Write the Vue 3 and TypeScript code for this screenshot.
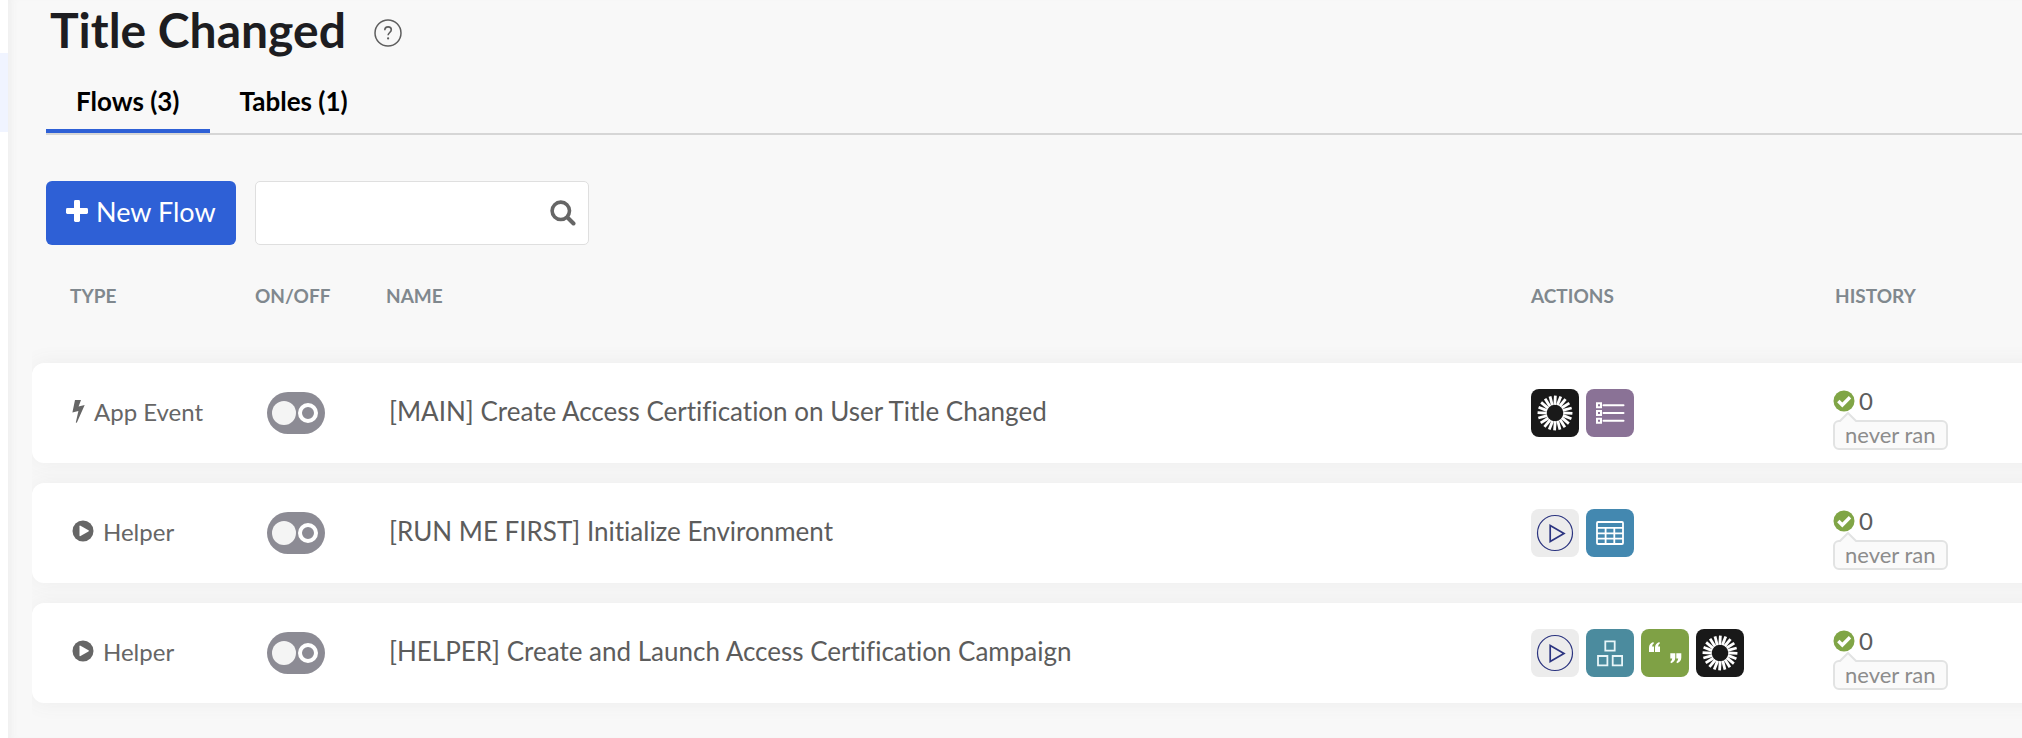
<script setup lang="ts">
import { ref } from 'vue'

type ActionIcon = 'okta' | 'list' | 'play' | 'table' | 'blocks' | 'quotes'

interface Flow {
  id: number
  type: 'App Event' | 'Helper'
  on: boolean
  name: string
  actions: ActionIcon[]
  runs: number
  status: string
}

const flows = ref<Flow[]>([
  {
    id: 1,
    type: 'App Event',
    on: false,
    name: '[MAIN] Create Access Certification on User Title Changed',
    actions: ['okta', 'list'],
    runs: 0,
    status: 'never ran',
  },
  {
    id: 2,
    type: 'Helper',
    on: false,
    name: '[RUN ME FIRST] Initialize Environment',
    actions: ['play', 'table'],
    runs: 0,
    status: 'never ran',
  },
  {
    id: 3,
    type: 'Helper',
    on: false,
    name: '[HELPER] Create and Launch Access Certification Campaign',
    actions: ['play', 'blocks', 'quotes', 'okta'],
    runs: 0,
    status: 'never ran',
  },
])

const tab = ref<'flows' | 'tables'>('flows')
const query = ref('')
const rays = Array.from({ length: 20 }, (_, i) => i * 18)
</script>

<template>
  <div class="page">
    <aside class="rail"><div class="rail-item"></div></aside>
    <main class="main">
      <header class="head">
        <h1>Title Changed</h1>
        <button class="help" type="button" aria-label="Help">
          <svg viewBox="0 0 28 28" width="28" height="28" fill="none" stroke="#5e5e5e">
            <circle cx="14" cy="14" r="13" stroke-width="1.5" />
            <path d="M10.8 11.2c0-2 1.3-3.3 3.3-3.3s3.2 1.2 3.2 2.9c0 2.6-3.2 2.8-3.2 5.5" stroke-width="1.6" />
            <circle cx="14.1" cy="19.4" r="1.1" fill="#5e5e5e" stroke="none" />
          </svg>
        </button>
      </header>

      <nav class="tabs" role="tablist">
        <button type="button" role="tab" :aria-selected="tab === 'flows'" :class="['tab', { active: tab === 'flows' }]" @click="tab = 'flows'">Flows (3)</button>
        <button type="button" role="tab" :aria-selected="tab === 'tables'" :class="['tab', { active: tab === 'tables' }]" @click="tab = 'tables'">Tables (1)</button>
      </nav>

      <div class="toolbar">
        <button class="new" type="button">
          <svg viewBox="0 0 22 22" width="22" height="22" fill="#fff">
            <rect x="8" y="0" width="6" height="22" rx="1.4" />
            <rect x="0" y="8" width="22" height="6" rx="1.4" />
          </svg>
          <span>New Flow</span>
        </button>
        <div class="search">
          <input v-model="query" type="text" aria-label="Search flows" />
          <svg viewBox="0 0 26 26" width="26" height="26" fill="none" stroke="#666" stroke-linecap="round">
            <circle cx="10.8" cy="10.8" r="8.7" stroke-width="3.6" />
            <path d="M17.5 17.500l6 6" stroke-width="4" />
          </svg>
        </div>
      </div>

      <div class="list">
        <table>
          <colgroup>
            <col class="c-type" /><col class="c-switch" /><col /><col class="c-actions" /><col class="c-history" />
          </colgroup>
          <thead>
            <tr>
              <th scope="col">TYPE</th>
              <th scope="col">ON/OFF</th>
              <th scope="col">NAME</th>
              <th scope="col">ACTIONS</th>
              <th scope="col">HISTORY</th>
            </tr>
          </thead>
          <tbody>
            <tr v-for="flow in flows" :key="flow.id">
              <td>
                <div class="type">
                  <svg v-if="flow.type === 'App Event'" viewBox="0 0 13 23" width="13" height="23" fill="#666">
                    <path d="M3 0h6L6.600 6.400 12.700 5 4.800 22.700l-1-.3L6.400 11 .4 12.500z" />
                  </svg>
                  <svg v-else viewBox="0 0 22 22" width="22" height="22">
                    <circle cx="11" cy="11" r="10.500" fill="#666" />
                    <path d="M7.500 6.200q0-1 1-.5l8 4.500q.9.600 0 1.200l-8 4.700q-1 .5-1-.6z" fill="#fff" />
                  </svg>
                  <span>{{ flow.type }}</span>
                </div>
              </td>
              <td>
                <label class="switch">
                  <input v-model="flow.on" type="checkbox" role="switch" :aria-label="'Turn on ' + flow.name" />
                  <span class="knob"></span>
                  <span class="ring"></span>
                </label>
              </td>
              <td class="name">{{ flow.name }}</td>
              <td>
                <div class="actions">
                  <span v-for="(icon, i) in flow.actions" :key="i" :class="['tile', icon]">
                    <svg viewBox="0 0 48 48" width="48" height="48" fill="none" stroke="#fff">
                      <g v-if="icon === 'okta'" stroke-width="2.8">
                        <path v-for="a in rays" :key="a" d="M24.400 6.600L23.800 15.800" :transform="`rotate(${a} 24 24)`" />
                      </g>
                      <g v-else-if="icon === 'list'">
                        <path d="M11 14.200h4v4h-4zM11 22h4v4h-4zM11 29.700h4v4h-4z" stroke-width="2" />
                        <path d="M17.500 16.200H37.500M17.500 24H37.500M17.500 31.700H37.500" stroke-width="2" stroke-linecap="round" />
                      </g>
                      <g v-else-if="icon === 'play'" stroke="#2c3580">
                        <circle cx="24" cy="24" r="17.5" stroke-width="1.2" />
                        <path d="M19.200 16.500v16L33 24.400z" stroke-width="1.7" />
                      </g>
                      <g v-else-if="icon === 'table'" stroke-width="1.8">
                        <rect x="11" y="13" width="26" height="22" rx="1" />
                        <path d="M11 18.800H37M11 24.300H37M11 29.600H37M19.600 18.800V35M28.300 18.800V35" />
                      </g>
                      <g v-else-if="icon === 'blocks'" stroke="#e8f5f8" stroke-width="1.8">
                        <path d="M19.300 12.300h9.400v9.400h-9.400zM12 27h9.400v9.400H12zM26.700 27h9.400v9.400h-9.400z" />
                      </g>
                      <g v-else fill="#fff" stroke="none">
                        <path d="M12.300 13l.6 1.200q-1.800 1.400-1.800 3.400H13V23H8v-4.300q0-4.200 4.300-5.700zM18.300 13l.6 1.200q-1.800 1.400-1.800 3.400H19V23h-5v-4.300q0-4.200 4.300-5.700z" />
                        <path d="M30 34.200l-.6-1.200q1.800-1.400 1.800-3.400h-1.900v-5.400h5v4.300q0 4.200-4.300 5.700zM36 34.200l-.6-1.200q1.800-1.400 1.800-3.400h-1.900v-5.400h5v4.300q0 4.200-4.300 5.700z" />
                      </g>
                    </svg>
                  </span>
                </div>
              </td>
              <td>
                <div class="history">
                  <div class="count">
                    <svg viewBox="0 0 22 22" width="22" height="22">
                      <circle cx="11" cy="11" r="10.500" fill="#80a546" />
                      <path d="M5.300 11l4 4 7.700-7.700" fill="none" stroke="#fff" stroke-width="3.4" />
                    </svg>
                    <span>{{ flow.runs }}</span>
                  </div>
                  <div class="callout">
                    <svg class="tip" viewBox="0 0 18 10" width="18" height="10">
                      <path d="M0 10L9 1l9 9" fill="#fafafa" stroke="#e2e3e3" stroke-width="2" />
                    </svg>
                    {{ flow.status }}
                  </div>
                </div>
              </td>
            </tr>
          </tbody>
        </table>
      </div>
    </main>
  </div>
</template>

<style>
body {
  margin: 0;
  background: #f8f8f8;
}
</style>

<style scoped>
.page {
  display: flex;
  min-height: 100vh;
  font-family: Lato, "Liberation Sans", sans-serif;
  font-variant-ligatures: none;
  color: #5c5c5c;
}

button,
input {
  font: inherit;
}

svg {
  display: block;
  flex: none;
}

.rail {
  flex: none;
  width: 8px;
  padding-top: 53px;
  background: #fff;
}

.rail-item {
  height: 79px;
  background: #f0f4ff;
}

.main {
  flex: 1;
  min-width: 0;
  background: #f8f8f8;
  box-shadow: inset 8px 0 8px -6px #ececec;
}

.head {
  display: flex;
  align-items: center;
  gap: 28px;
  height: 60px;
  padding-left: 42px;
}

h1 {
  margin: 0;
  font-size: 48px;
  line-height: 60px;
  font-weight: 700;
  color: #1d1d21;
}

.help {
  padding: 5px 0 0;
  border: 0;
  background: none;
}

.tabs {
  display: flex;
  margin: 13px 0 0 38px;
  border-bottom: 2px solid #d6d6d6;
}

.tab {
  height: 60px;
  padding: 0 30px;
  border: 0;
  border-bottom: 4px solid transparent;
  background: none;
  font-size: 26px;
  font-weight: 700;
  color: #000;
}

.tab.active {
  border-bottom-color: #2e60d6;
}

.toolbar {
  display: flex;
  gap: 19px;
  margin: 46px 0 0 38px;
}

.new {
  display: flex;
  align-items: center;
  gap: 8px;
  height: 64px;
  padding: 0 20px 4px;
  border: 0;
  border-radius: 6px;
  background: #2e60d6;
  color: #fff;
  font-size: 27px;
}

.search {
  box-sizing: border-box;
  display: flex;
  align-items: center;
  width: 334px;
  height: 64px;
  padding: 0 12px 0 16px;
  border: 1px solid #dfdfdf;
  border-radius: 5px;
  background: #fff;
}

.search input {
  flex: 1;
  min-width: 0;
  border: 0;
  outline: 0;
  background: none;
  font-size: 26px;
}

.list {
  margin-left: 24px;
  overflow: hidden;
}

/* The rows run past the right edge of the window. */
table {
  width: calc(100% + 24px);
  table-layout: fixed;
  border-collapse: separate;
  border-spacing: 0 20px;
}

.c-type {
  width: 223px;
}

.c-switch {
  width: 131px;
}

.c-actions {
  width: 302px;
}

.c-history {
  width: 213px;
}

th {
  height: 59px;
  padding: 19px 0 0;
  text-align: left;
  vertical-align: top;
  font-size: 19px;
  line-height: 24px;
  font-weight: 700;
  color: #80888e;
}

th:first-child {
  padding-left: 38px;
}

th:last-child {
  padding-left: 2px;
}

tbody tr {
  border-radius: 12px 0 0 12px;
  background: #fff;
  box-shadow: 0 0 20px #ececec;
}

td {
  box-sizing: border-box;
  height: 100px;
  padding: 0;
  white-space: nowrap;
}

td:first-child {
  padding-left: 40px;
  border-radius: 12px 0 0 12px;
}

.type {
  display: flex;
  align-items: center;
  gap: 9px;
  padding-bottom: 4px;
  font-size: 24px;
  color: #666;
}

.switch {
  position: relative;
  display: flex;
  align-items: center;
  gap: 2px;
  box-sizing: border-box;
  width: 58px;
  height: 42px;
  margin-left: 12px;
  padding-left: 5px;
  border-radius: 21px;
  background: #8c8b94;
}

.switch input {
  position: absolute;
  inset: 0;
  width: 100%;
  height: 100%;
  margin: 0;
  opacity: 0;
}

.knob {
  width: 24px;
  height: 24px;
  border-radius: 50%;
  background: #f4f4f4;
}

.ring {
  box-sizing: border-box;
  width: 20px;
  height: 20px;
  border: 4px solid #fff;
  border-radius: 50%;
}

.name {
  padding: 0 0 4px 3px;
  font-size: 26px;
}

.actions {
  display: flex;
  gap: 7px;
}

.tile {
  width: 48px;
  height: 48px;
  border-radius: 8px;
}

.okta {
  background: #191919;
}

.tile.list {
  margin: 0;
  background: #8a7296;
}

.play {
  background: #ececec;
}

.table {
  background: #4388b0;
}

.blocks {
  background: #4b8b9e;
}

.quotes {
  background: #7fa145;
}

.history {
  display: flex;
  flex-direction: column;
  align-items: flex-start;
  gap: 8px;
  padding-top: 14px;
}

.count {
  display: flex;
  align-items: center;
  gap: 4px;
  font-size: 24px;
  line-height: 22px;
}

.callout {
  position: relative;
  box-sizing: border-box;
  height: 30px;
  padding: 0 10px;
  border: 2px solid #e2e3e3;
  border-radius: 6px;
  background: #fafafa;
  color: #8c8c8c;
  font-size: 22px;
  line-height: 25px;
}

.tip {
  position: absolute;
  left: 4px;
  top: -10px;
}
</style>
